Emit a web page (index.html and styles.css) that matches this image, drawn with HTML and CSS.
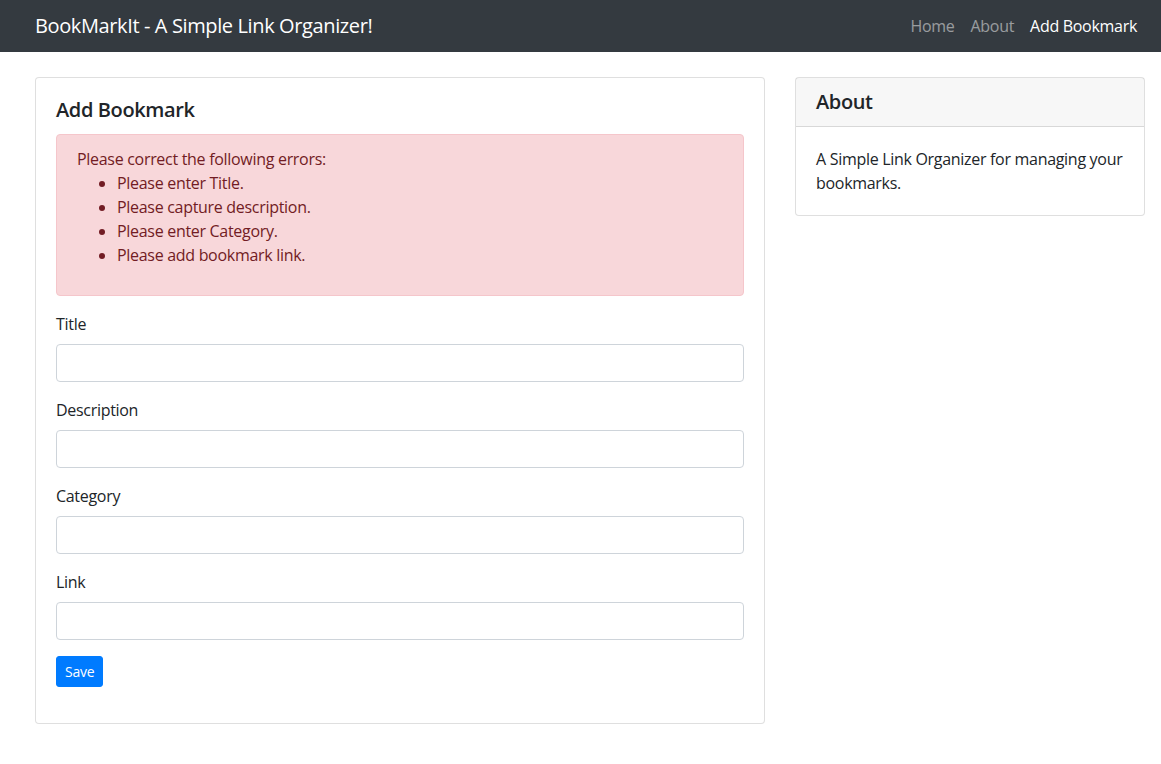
FILE: index.html
```html
<!DOCTYPE html>
<html lang="en">
<head>
<meta charset="utf-8">
<title>BookMarkIt</title>
<link rel="stylesheet" href="styles.css">
</head>
<body>
<nav class="navbar">
  <a class="brand" href="#">BookMarkIt - A Simple Link Organizer!</a>
  <ul class="nav">
    <li><a class="nav-link" href="#">Home</a></li>
    <li><a class="nav-link" href="#">About</a></li>
    <li><a class="nav-link active" href="#">Add Bookmark</a></li>
  </ul>
</nav>
<main class="layout">
  <section class="card">
    <div class="card-body">
      <h5 class="card-title">Add Bookmark</h5>
      <div class="alert">
        Please correct the following errors:
        <ul class="errors">
          <li>Please enter Title.</li>
          <li>Please capture description.</li>
          <li>Please enter Category.</li>
          <li>Please add bookmark link.</li>
        </ul>
      </div>
      <form class="form">
        <div class="form-group">
          <label class="label">Title</label>
          <input class="input" type="text">
        </div>
        <div class="form-group">
          <label class="label">Description</label>
          <input class="input" type="text">
        </div>
        <div class="form-group">
          <label class="label">Category</label>
          <input class="input" type="text">
        </div>
        <div class="form-group">
          <label class="label">Link</label>
          <input class="input" type="text">
        </div>
        <div class="form-group">
          <button class="btn" type="button">Save</button>
        </div>
      </form>
    </div>
  </section>
  <aside class="card about">
    <div class="card-header"><h5 class="card-title flush">About</h5></div>
    <div class="card-body">
      A Simple Link Organizer for managing your bookmarks.
    </div>
  </aside>
</main>
</body>
</html>
```
FILE: styles.css
```css
* { box-sizing: border-box; }
html, body { margin: 0; }
body {
  font-family: "Segoe UI", "Open Sans", "Noto Sans", sans-serif;
  font-size: 16px;
  line-height: 1.5;
  letter-spacing: -0.3px;
  color: #212529;
  background: #fff;
}
.navbar {
  height: 52px;
  background: #343a40;
  display: flex;
  align-items: center;
  justify-content: space-between;
  padding: 0 16px 0 35px;
}
.brand {
  color: #fff;
  font-size: 20px;
  line-height: 30px;
  letter-spacing: -0.38px;
  text-decoration: none;
}
.nav {
  display: flex;
  list-style: none;
  margin: 0;
  padding: 0;
}
.nav-link {
  display: block;
  padding: 8px;
  color: rgba(255,255,255,.5);
  text-decoration: none;
}
.nav-link.active { color: #fff; }
.layout {
  display: grid;
  grid-template-columns: 730px 350px;
  column-gap: 30px;
  align-items: start;
  padding: 25px 0 0 35px;
}
.card {
  border: 1px solid rgba(0,0,0,.125);
  border-radius: 4px;
  background: #fff;
}
.card-body { padding: 20px; }
.card-title {
  margin: 0 0 12px;
  font-size: 20px;
  font-weight: 600;
  line-height: 1.2;
  letter-spacing: -0.38px;
}
.card-title.flush { margin: 0; }
.card-header {
  padding: 12px 20px;
  background: rgba(0,0,0,.03);
  border-bottom: 1px solid rgba(0,0,0,.125);
}
.alert {
  background: #f8d7da;
  border: 1px solid #f5c6cb;
  color: #721c24;
  border-radius: 4px;
  padding: 12px 20px;
  margin-bottom: 16px;
}
.errors {
  margin: 0 0 16px;
  padding-left: 40px;
}
.form-group { margin-bottom: 16px; }
.label {
  display: block;
  margin-bottom: 8px;
}
.input {
  display: block;
  width: 100%;
  height: 38px;
  border: 1px solid #ced4da;
  border-radius: 4px;
  padding: 6px 12px;
  font: inherit;
}
.btn {
  font-family: inherit;
  font-size: 14px;
  line-height: 21px;
  letter-spacing: -0.25px;
  padding: 4px 8px;
  border: 1px solid #007bff;
  border-radius: 3px;
  background: #007bff;
  color: #fff;
}
```
